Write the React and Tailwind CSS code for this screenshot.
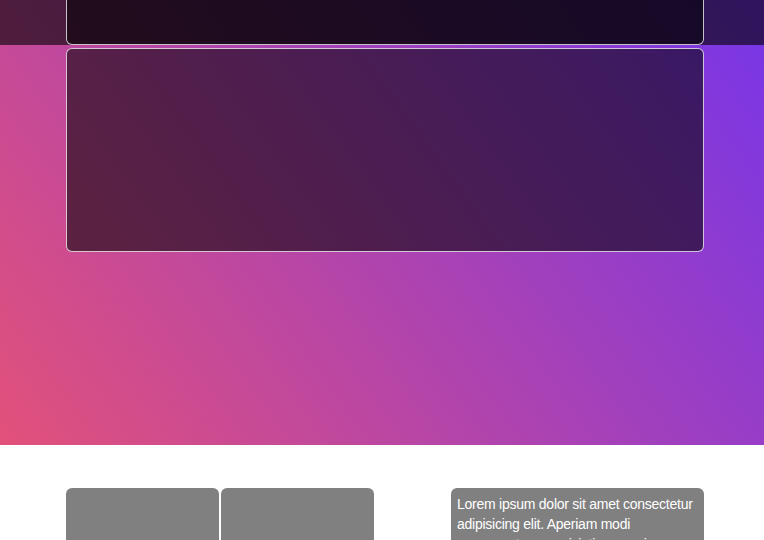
export default function App() {
  return (
    <div className="w-[764px] h-[540px] overflow-hidden bg-white" style={{ fontFamily: '"Liberation Sans", Arial, sans-serif' }}>
      {/* Hero */}
      <section className="h-[445px] bg-[linear-gradient(54deg,#e2517a,#7735e8)] flex flex-col">
        <div className="h-[45px] bg-black/60">
          <div className="ml-[66px] w-[638px] h-full bg-black/55 border-x border-b border-white/75 rounded-b-md" />
        </div>
        <div className="pt-[3px]">
          <div className="ml-[66px] w-[638px] h-[204px] bg-black/55 border border-white/75 rounded-md" />
        </div>
      </section>

      {/* Content */}
      <section className="pt-[43px]">
        <div className="ml-[66px] w-[638px] flex">
          <div className="flex gap-[2px]">
            <div className="w-[153px] h-[60px] bg-[#808080] rounded-t-md" />
            <div className="w-[153px] h-[60px] bg-[#808080] rounded-t-md" />
          </div>
          <div className="ml-auto w-[253px] bg-[#808080] rounded-t-md pl-1.5 pr-1 pt-1.5 pb-2 text-white text-[14px] leading-[20px] tracking-[-0.25px]">
            Lorem ipsum dolor sit amet consectetur adipisicing elit. Aperiam modi consequatur perspiciatis corporis
            voluptatum, nihil quas ipsa dolorum iure sequi.
          </div>
        </div>
      </section>
    </div>
  )
}
